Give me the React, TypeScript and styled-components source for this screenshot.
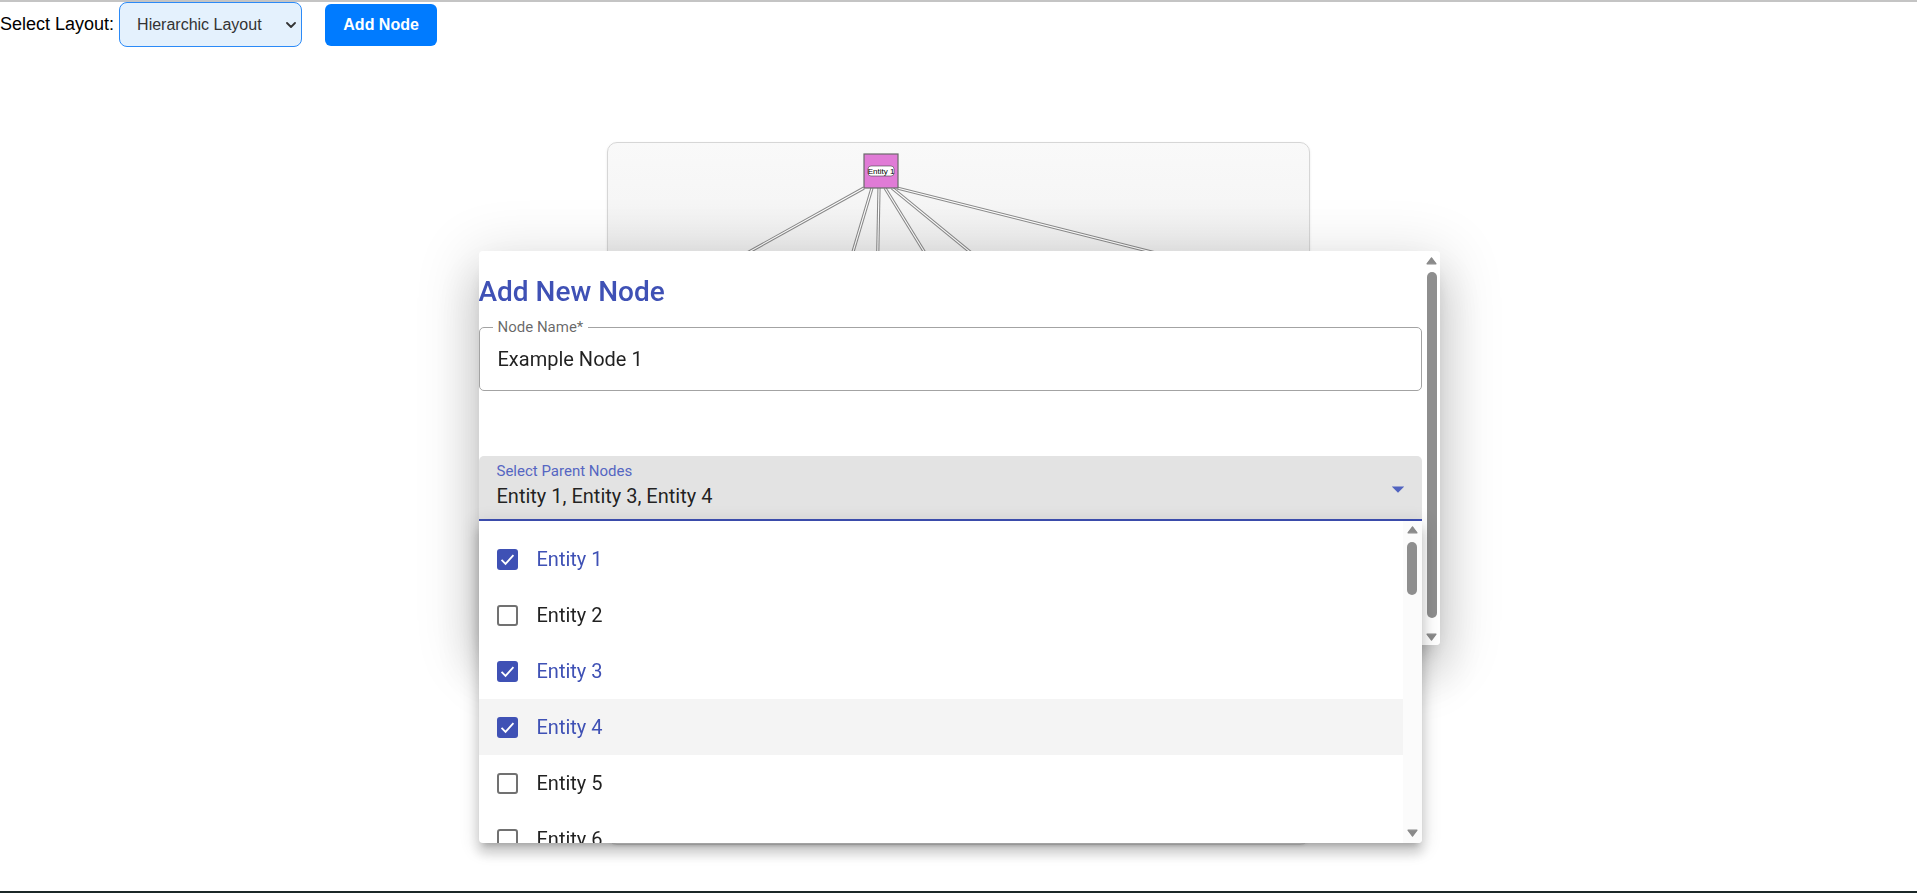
import React from "react";
import styled, { createGlobalStyle, css } from "styled-components";

const GlobalStyle = createGlobalStyle`
  html, body { margin: 0; padding: 0; background: #ffffff; }
  body { font-family: Roboto, "Liberation Sans", sans-serif; }
  * { box-sizing: border-box; }
`;

const Page = styled.div`
  position: relative;
  height: 893px;
  border-top: 2px solid #c4c4c4;
  border-bottom: 2px solid #1b2828;
  overflow: hidden;
`;

const Header = styled.div`
  display: flex;
  align-items: center;
  height: 45px;
`;

const LayoutLabel = styled.label`
  font-family: "Liberation Sans", Arial, sans-serif;
  font-size: 18px;
  color: #000;
`;

const SelectWrap = styled.div`
  position: relative;
  margin-left: 5px;
  width: 183px;
  height: 45px;
`;

const LayoutSelect = styled.select`
  appearance: none;
  -webkit-appearance: none;
  width: 100%;
  height: 100%;
  padding: 0 0 0 17px;
  border: 1px solid #2b8af7;
  border-radius: 8px;
  background: #e4f1fd;
  color: #333333;
  font-family: "Liberation Sans", Arial, sans-serif;
  font-size: 16px;
  outline: none;
`;

const Chevron = styled.svg`
  position: absolute;
  right: 6px;
  top: 50%;
  transform: translateY(-50%);
  width: 10px;
  height: 6px;
  pointer-events: none;
`;

const AddButton = styled.button`
  margin-left: 23px;
  width: 112px;
  height: 42px;
  border: none;
  border-radius: 6px;
  background: #007bff;
  color: #ffffff;
  font-family: "Liberation Sans", Arial, sans-serif;
  font-weight: 700;
  font-size: 16px;
`;

const GraphCard = styled.div`
  width: 703px;
  height: 703px;
  margin: 95px auto 0;
  border: 1px solid #d6d6d6;
  border-radius: 10px;
  background: linear-gradient(180deg, #f9f9f9 0px, #f6f6f6 60px, #ececec 120px, #ececec 100%);
  box-shadow: 0 1px 3px rgba(0, 0, 0, 0.08);
  overflow: hidden;
`;

const GraphSvg = styled.svg`
  display: block;
  width: 100%;
  height: 100%;
`;

const Overlay = styled.div`
  position: fixed;
  inset: 0;
  display: flex;
  align-items: center;
  justify-content: center;
  padding-top: 3px;
  padding-left: 1px;
`;

const DialogAnchor = styled.div`
  position: relative;
  width: 961px;
  height: 394px;
`;

const Dialog = styled.div`
  display: flex;
  width: 100%;
  height: 100%;
  background: #ffffff;
  border-radius: 4px;
  overflow: hidden;
  box-shadow: 0 14px 19px -9px rgba(0, 0, 0, 0.2), 0 30px 48px 4px rgba(0, 0, 0, 0.14),
    0 11px 58px 10px rgba(0, 0, 0, 0.12);
`;

const DialogBody = styled.div`
  flex: 1;
  display: flex;
  flex-direction: column;
  padding: 18px 2px 0 0;
  min-width: 0;
`;

const Title = styled.h2`
  margin: 0;
  font-family: Roboto, sans-serif;
  font-size: 28px;
  font-weight: 500;
  line-height: 45px;
  color: #3f51b5;
`;

const OutlinedField = styled.div`
  position: relative;
  margin-top: 13px;
  height: 64px;
  border: 1px solid #a3a3a3;
  border-radius: 5px;
  display: flex;
  align-items: center;
  padding-left: 18px;
`;

const FieldLegend = styled.span`
  position: absolute;
  left: 13px;
  top: -10px;
  padding: 0 5px;
  background: #ffffff;
  font-size: 15px;
  line-height: 18px;
  color: rgba(0, 0, 0, 0.6);
`;

const TextInput = styled.input`
  width: 100%;
  height: 23px;
  border: none;
  outline: none;
  padding: 0;
  background: transparent;
  font-family: Roboto, sans-serif;
  font-size: 20px;
  color: rgba(0, 0, 0, 0.87);
`;

const FilledSelect = styled.div`
  position: relative;
  margin-top: 65px;
  height: 65px;
  padding: 8px 18px 0 18px;
  background: #e3e3e3;
  border-radius: 5px 5px 0 0;
  border-bottom: 2px solid #3f51b5;
  display: flex;
  flex-direction: column;
`;

const FilledLabel = styled.span`
  font-size: 15px;
  line-height: 15px;
  color: #5566c2;
`;

const FilledValue = styled.span`
  margin-top: 6px;
  font-size: 20px;
  line-height: 23px;
  color: rgba(0, 0, 0, 0.87);
`;

const DropArrow = styled.svg`
  position: absolute;
  right: 9px;
  top: 18px;
  width: 30px;
  height: 30px;
`;

const Menu = styled.div`
  position: absolute;
  left: 0;
  top: 270px;
  width: 943px;
  height: 322px;
  display: flex;
  background: #ffffff;
  border-radius: 0 0 4px 4px;
  overflow: hidden;
  box-shadow: 0 6px 6px -4px rgba(0, 0, 0, 0.2), 0 10px 12px 1px rgba(0, 0, 0, 0.14),
    0 4px 18px 3px rgba(0, 0, 0, 0.12);
`;

const MenuList = styled.ul`
  flex: 1;
  margin: 0;
  padding: 10px 0 0;
  list-style: none;
`;

const MenuItem = styled.li<{ $active?: boolean }>`
  display: flex;
  align-items: center;
  height: 56px;
  padding-left: 18px;
  gap: 19px;
  background: ${(p) => (p.$active ? "#f4f4f4" : "transparent")};
`;

const CheckBox = styled.span<{ $checked?: boolean }>`
  display: flex;
  align-items: center;
  justify-content: center;
  width: 21px;
  height: 21px;
  border-radius: 3px;
  ${(p) =>
    p.$checked
      ? css`
          background: #3f51b5;
        `
      : css`
          border: 2px solid #717171;
        `}
`;

const ItemText = styled.span<{ $checked?: boolean }>`
  font-size: 20px;
  line-height: 23px;
  color: ${(p) => (p.$checked ? "#3f51b5" : "rgba(0, 0, 0, 0.87)")};
`;

const ScrollColumn = styled.div<{ $width: number; $track: string; $padTop: number; $padBottom: number }>`
  width: ${(p) => p.$width}px;
  flex: none;
  display: flex;
  flex-direction: column;
  align-items: center;
  background: ${(p) => p.$track};
  padding: ${(p) => p.$padTop}px 0 ${(p) => p.$padBottom}px;
`;

const ScrollThumb = styled.div<{ $height: number; $gap: number }>`
  width: 10px;
  height: ${(p) => p.$height}px;
  margin-top: ${(p) => p.$gap}px;
  border-radius: 5px;
  background: #8e8e8e;
`;

const ScrollSpacer = styled.div`
  flex: 1;
`;

const ArrowIcon = styled.svg`
  display: block;
  width: 11px;
  height: 8px;
`;

const ScrollArrow = ({ down }: { down?: boolean }) => (
  <ArrowIcon viewBox="0 0 11 8">
    {down ? (
      <path d="M1 1.2 L10 1.2 L5.5 7.2 Z" fill="#8a8a8a" stroke="#8a8a8a" strokeWidth="1.2" strokeLinejoin="round" />
    ) : (
      <path d="M1 6.8 L10 6.8 L5.5 0.8 Z" fill="#8a8a8a" stroke="#8a8a8a" strokeWidth="1.2" strokeLinejoin="round" />
    )}
  </ArrowIcon>
);

const Scrollbar = ({
  width,
  track,
  padTop,
  padBottom,
  thumb,
  gap,
}: {
  width: number;
  track: string;
  padTop: number;
  padBottom: number;
  thumb: number;
  gap: number;
}) => (
  <ScrollColumn $width={width} $track={track} $padTop={padTop} $padBottom={padBottom}>
    <ScrollArrow />
    <ScrollThumb $height={thumb} $gap={gap} />
    <ScrollSpacer />
    <ScrollArrow down />
  </ScrollColumn>
);

const edges: [number, number][] = [
  [256, 69],
  [264, 233],
  [271, 269],
  [277, 341],
  [284, 411],
  [289, 703],
];

const entities = [
  { name: "Entity 1", checked: true },
  { name: "Entity 2", checked: false },
  { name: "Entity 3", checked: true },
  { name: "Entity 4", checked: true, active: true },
  { name: "Entity 5", checked: false },
  { name: "Entity 6", checked: false },
];

export default function App() {
  return (
    <>
      <GlobalStyle />
      <Page>
        <Header>
          <LayoutLabel>Select Layout:</LayoutLabel>
          <SelectWrap>
            <LayoutSelect defaultValue="hierarchic">
              <option value="hierarchic">Hierarchic Layout</option>
              <option value="organic">Organic Layout</option>
              <option value="tree">Tree Layout</option>
            </LayoutSelect>
            <Chevron viewBox="0 0 10 6">
              <path d="M1 1 L5 5 L9 1" fill="none" stroke="#333" strokeWidth="1.8" strokeLinecap="round" strokeLinejoin="round" />
            </Chevron>
          </SelectWrap>
          <AddButton>Add Node</AddButton>
        </Header>

        <GraphCard>
          <GraphSvg viewBox="0 0 701 701">
            {edges.map(([sx, ex], i) => (
              <g key={i}>
                <line x1={sx} y1={45} x2={ex} y2={149} stroke="#8a8a8a" strokeWidth={3.2} />
                <line x1={sx} y1={45} x2={ex} y2={149} stroke="#ffffff" strokeWidth={1.1} />
              </g>
            ))}
            <rect x={256} y={11} width={34} height={34} fill="#e07bd6" stroke="#6a6a6a" strokeWidth={1.2} />
            <rect x={260} y={23} width={26} height={10} rx={3} fill="#ffffff" stroke="#444" strokeWidth={0.6} />
            <text
              x={273}
              y={31}
              textAnchor="middle"
              fontFamily="Liberation Sans, Arial, sans-serif"
              fontSize={8}
              fill="#000"
            >
              Entity 1
            </text>
          </GraphSvg>
        </GraphCard>

        <Overlay>
          <DialogAnchor>
            <Dialog>
              <DialogBody>
                <Title>Add New Node</Title>
                <OutlinedField>
                  <FieldLegend>Node Name*</FieldLegend>
                  <TextInput defaultValue="Example Node 1" readOnly />
                </OutlinedField>
                <FilledSelect>
                  <FilledLabel>Select Parent Nodes</FilledLabel>
                  <FilledValue>Entity 1, Entity 3, Entity 4</FilledValue>
                  <DropArrow viewBox="0 0 24 24">
                    <path d="M7 10l5 5 5-5z" fill="#5163c0" />
                  </DropArrow>
                </FilledSelect>
              </DialogBody>
              <Scrollbar width={16} track="#ffffff" padTop={6} padBottom={4} thumb={346} gap={7} />
            </Dialog>
            <Menu>
              <MenuList>
                {entities.map((e) => (
                  <MenuItem key={e.name} $active={e.active}>
                    <CheckBox $checked={e.checked}>
                      {e.checked && (
                        <svg width="19" height="19" viewBox="0 0 24 24">
                          <path d="M4.5 12.5 L9.5 17.5 L19.5 6.5" fill="none" stroke="#fff" strokeWidth="2.3" />
                        </svg>
                      )}
                    </CheckBox>
                    <ItemText $checked={e.checked}>{e.name}</ItemText>
                  </MenuItem>
                ))}
              </MenuList>
              <Scrollbar width={19} track="#fbfbfb" padTop={5} padBottom={6} thumb={53} gap={8} />
            </Menu>
          </DialogAnchor>
        </Overlay>
      </Page>
    </>
  );
}
